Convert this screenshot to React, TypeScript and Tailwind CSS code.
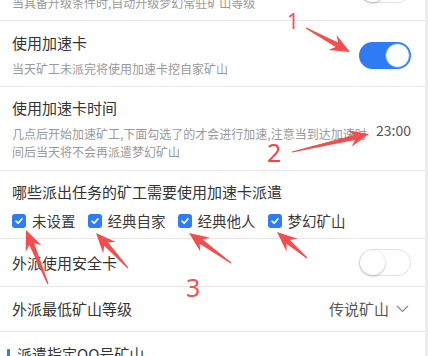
import React from "react";

function Toggle({ on }: { on: boolean }) {
  if (on) {
    return (
      <div className="flex h-[27px] w-[52px] shrink-0 items-center justify-end rounded-full bg-[#2d7bf5] p-[1px]">
        <div className="h-[25px] w-[25px] rounded-full border border-[#4a8ef7] bg-white" />
      </div>
    );
  }
  return (
    <div className="flex h-[27px] w-[52px] shrink-0 items-center justify-start rounded-full border border-[#e2e2e2] bg-white">
      <div className="h-[25px] w-[25px] rounded-full bg-white shadow-[0_1px_3px_rgba(0,0,0,0.25)]" />
    </div>
  );
}

function Check({ label }: { label: string }) {
  return (
    <div className="flex items-center gap-[6px]">
      <div className="flex h-[14px] w-[14px] items-center justify-center rounded-[3px] bg-[#2f7df6]">
        <svg width="10" height="10" viewBox="0 0 10 10">
          <path d="M2 5.2 L4.2 7.2 L8 2.8" fill="none" stroke="white" strokeWidth="1.7" strokeLinecap="round" strokeLinejoin="round" />
        </svg>
      </div>
      <span className="text-[14.5px] leading-5 text-[#3a3a3a]">{label}</span>
    </div>
  );
}

function arrowPts(x1: number, y1: number, x2: number, y2: number, H = 20, W = 8.5, s = 2.6) {
  const dx = x2 - x1;
  const dy = y2 - y1;
  const L = Math.hypot(dx, dy);
  const ux = dx / L;
  const uy = dy / L;
  const nx = -uy;
  const ny = ux;
  const p = (t: number, w: number) => `${(x1 + ux * t + nx * w).toFixed(1)},${(y1 + uy * t + ny * w).toFixed(1)}`;
  return [p(0, 0.6), p(L - H + 5, s), p(L - H, W), p(L, 0), p(L - H, -W), p(L - H + 5, -s), p(0, -0.6)].join(" ");
}

const arrows: [number, number, number, number][] = [
  [306, 28, 350, 52],
  [292, 152, 369, 134],
  [48, 284, 26, 230],
  [128, 268, 96, 233],
  [231, 263, 189, 233],
  [307, 258, 277, 232],
];

export default function App() {
  return (
    <div className="relative flex h-[356px] w-[428px] overflow-hidden bg-white font-['Noto_Sans_CJK_SC','Noto_Sans',sans-serif]">
      <div className="flex min-w-0 flex-1 flex-col">
        {/* cut-off previous row */}
        <div className="flex h-[21px] shrink-0 flex-col justify-end overflow-hidden border-b border-[#e8e8e8]">
          <div className="flex shrink-0 items-center pl-3 pr-[14px] pb-[9px]">
            <div className="flex-1">
              <div className="h-[27px]" />
              <div className="text-[12px] leading-[17px] text-[#999]">当具备升级条件时,自动升级梦幻常驻矿山等级</div>
            </div>
            <Toggle on={false} />
          </div>
        </div>

        <div className="flex shrink-0 items-center border-b border-[#e8e8e8] pl-3 pr-[14px] pt-3 pb-[9px]">
          <div className="flex-1">
            <div className="text-[15px] leading-5 text-[#333]">使用加速卡</div>
            <div className="mt-[7px] text-[12px] leading-[17px] text-[#999]">当天矿工未派完将使用加速卡挖自家矿山</div>
          </div>
          <Toggle on={true} />
        </div>

        <div className="flex shrink-0 items-center gap-[6px] border-b border-[#e8e8e8] pl-3 pr-[14px] pt-[11px] pb-[9px]">
          <div className="min-w-0 flex-1">
            <div className="text-[15px] leading-5 text-[#333]">使用加速卡时间</div>
            <div className="mt-[7px] text-[12px] leading-[18px] text-[#999]">
              几点后开始加速矿工,下面勾选了的才会进行加速,注意当到达加速时间后当天将不会再派遣梦幻矿山
            </div>
          </div>
          <span className="shrink-0 text-[14px] leading-5 text-[#555]">23:00</span>
        </div>

        <div className="shrink-0 border-b border-[#e8e8e8] pl-3 pr-[14px] pt-[11px] pb-[7px]">
          <div className="text-[15px] leading-5 text-[#333]">哪些派出任务的矿工需要使用加速卡派遣</div>
          <div className="mt-[9px] flex items-center gap-[12px]">
            <Check label="未设置" />
            <Check label="经典自家" />
            <Check label="经典他人" />
            <Check label="梦幻矿山" />
          </div>
        </div>

        <div className="flex h-[48px] shrink-0 items-center border-b border-[#e8e8e8] pl-3 pr-[14px]">
          <span className="flex-1 text-[15px] leading-5 text-[#333]">外派使用安全卡</span>
          <Toggle on={false} />
        </div>

        <div className="flex h-[45px] shrink-0 items-center border-b border-[#e8e8e8] pl-3 pr-[16px]">
          <span className="flex-1 text-[15px] leading-5 text-[#333]">外派最低矿山等级</span>
          <span className="text-[15px] leading-5 text-[#555]">传说矿山</span>
          <svg className="ml-[7px]" width="13" height="8" viewBox="0 0 13 8">
            <path d="M1 1 L6.5 6.5 L12 1" fill="none" stroke="#8a8a8a" strokeWidth="1.2" />
          </svg>
        </div>

        <div className="flex shrink-0 items-start pl-[7px] pt-[12px]">
          <div className="mt-[5px] h-[16px] w-[3px] rounded-[1px] bg-[#2f7df6]" />
          <span className="ml-[7px] text-[15px] leading-5 text-[#333]">派遣指定QQ号矿山</span>
        </div>
      </div>
      <div className="w-[3px] shrink-0 bg-[#ececec]" />

      <svg className="pointer-events-none absolute inset-0" width="428" height="356" viewBox="0 0 428 356">
        {arrows.map((a, i) => (
          <polygon key={i} points={arrowPts(a[0], a[1], a[2], a[3])} fill="#f44d4d" />
        ))}
      </svg>
      <span className="pointer-events-none absolute left-[287px] top-[11px] font-['Noto_Sans',sans-serif] text-[21px] leading-none text-[#f4506a]">1</span>
      <span className="pointer-events-none absolute left-[267px] top-[140px] font-['Noto_Sans',sans-serif] text-[25px] leading-none text-[#f24646]">2</span>
      <span className="pointer-events-none absolute left-[186px] top-[275px] font-['Noto_Sans',sans-serif] text-[25px] leading-none text-[#f25252]">3</span>
    </div>
  );
}
